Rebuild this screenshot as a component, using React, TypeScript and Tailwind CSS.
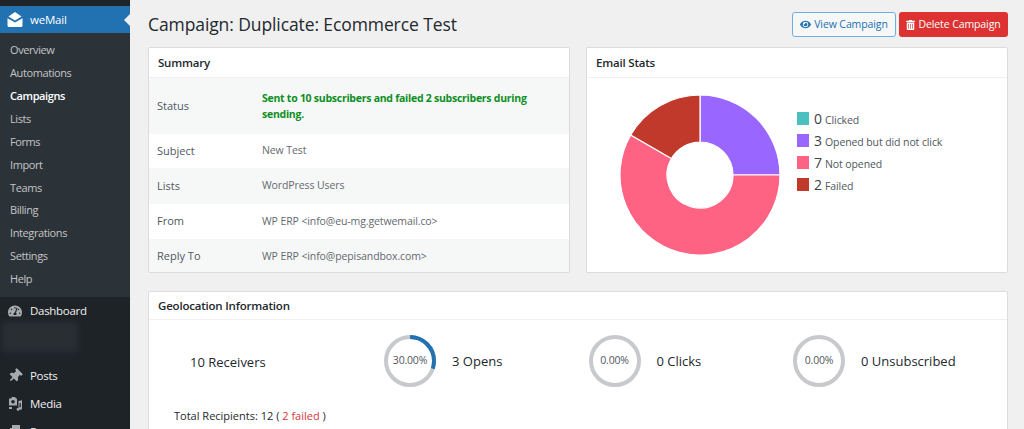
import React from "react";
import { FaEye, FaTrashAlt, FaTachometerAlt, FaThumbtack } from "react-icons/fa";

const sub = ["Overview", "Automations", "Campaigns", "Lists", "Forms", "Import", "Teams", "Billing", "Integrations", "Settings", "Help"];
const rows = [
  ["Status", "Sent to 10 subscribers and failed 2 subscribers during sending.", "h-[56px]"],
  ["Subject", "New Test", "h-[34px]"],
  ["Lists", "WordPress Users", "h-[36px]"],
  ["From", "WP ERP <info@eu-mg.getwemail.co>", "h-[35px]"],
  ["Reply To", "WP ERP <info@pepisandbox.com>", "h-[35px]"],
];
const legend = [
  ["0", "Clicked", "bg-[#4bc0c0]"],
  ["3", "Opened but did not click", "bg-[#9966ff]"],
  ["7", "Not opened", "bg-[#ff6384]"],
  ["2", "Failed", "bg-[#c0392b]"],
];

function Ring({ pct, label }: { pct: number; label: string }) {
  const c = 2 * Math.PI * 24;
  return (
    <div className="relative w-[52px] h-[52px] shrink-0">
      <svg width="52" height="52" viewBox="0 0 52 52" className="block">
        <circle cx="26" cy="26" r="24" fill="none" stroke="#c8c9cc" strokeWidth="4" />
        {pct > 0 && (
          <circle cx="26" cy="26" r="24" fill="none" stroke="#2271b1" strokeWidth="4" strokeDasharray={`${(c * pct) / 100} ${c}`} transform="rotate(-90 26 26)" />
        )}
      </svg>
      <div className="absolute inset-0 flex items-center justify-center text-[10.5px] text-[#50575e] tracking-[-0.2px]">{label}</div>
    </div>
  );
}

function Card({ title, className, head, children }: { title: string; className: string; head: string; children: React.ReactNode }) {
  return (
    <section className={`bg-white border border-[#dcdcde] rounded-[2px] ${className}`}>
      <h2 className={`${head} px-[9px] flex items-center border-b border-[#f0f0f1] text-[11.5px] font-semibold tracking-[-0.2px] text-[#23282d]`}>{title}</h2>
      {children}
    </section>
  );
}

function Stat({ text }: { text: string }) {
  return <span className="pt-[1px] text-[13px] font-medium text-[#23282d]">{text}</span>;
}

const navRow = "h-[28px] shrink-0 flex items-center pl-[8px] gap-[8px] text-[11.5px] tracking-[-0.3px] text-[#f0f0f1]";

export default function App() {
  return (
    <div className="flex w-[1024px] h-[429px] overflow-hidden bg-[#f0f0f1] font-['Open_Sans',sans-serif]">
      <aside className="w-[130px] shrink-0 bg-[#1d2327] pt-[6px] flex flex-col">
        <div className="relative h-[27px] shrink-0 bg-[#2271b1] flex items-center pl-[7px] gap-[7px] text-white text-[11.5px] tracking-[-0.2px]">
          <svg width="16" height="15" viewBox="0 0 16 15" fill="white">
            <path d="M8 0 L14.5 4.6 L8 8.6 L1.5 4.6 Z" />
            <path d="M0.5 6.2 L8 10.6 L15.5 6.2 V13.5 Q15.5 15 14 15 H2 Q0.5 15 0.5 13.5 Z" />
          </svg>
          <span>weMail</span>
          <span className="absolute right-0 top-[8px] w-0 h-0 border-y-[6px] border-y-transparent border-r-[6px] border-r-[#f0f0f1]" />
        </div>
        <ul className="bg-[#2c3338] h-[264px] shrink-0 pt-[6px]">
          {sub.map((s) => (
            <li key={s} className={`h-[22.9px] flex items-center pl-[10px] text-[11px] tracking-[-0.4px] ${s === "Campaigns" ? "text-white font-semibold" : "text-[#c3c4c7]"}`}>{s}</li>
          ))}
        </ul>
        <div className={navRow}>
          <FaTachometerAlt className="w-[14px] h-[14px] text-[#a7aaad]" />
          <span>Dashboard</span>
        </div>
        <div className="ml-[2px] mt-[-3px] w-[76px] h-[30px] shrink-0 bg-[#292e33] blur-[3px]" />
        <div className={`${navRow} mt-[10px]`}>
          <FaThumbtack className="w-[14px] h-[14px] text-[#a7aaad] rotate-45" />
          <span>Posts</span>
        </div>
        <div className={navRow}>
          <svg width="14" height="14" viewBox="0 0 14 14" fill="#a7aaad">
            <path d="M1 1.5 H3 L4 0 H7 L8 1.5 H9 V8.5 H1 Z M5 3 A1.8 1.8 0 1 0 5 6.6 A1.8 1.8 0 1 0 5 3 Z" fillRule="evenodd" />
            <path d="M10.5 4 L14 3.2 V11.5 A1.5 1.3 0 1 1 12.8 10.2 V6 L11.5 6.3 V12.5 A1.5 1.3 0 1 1 10.5 11.2 Z" />
            <path d="M1 10 H4 V12 H1 Z" />
          </svg>
          <span>Media</span>
        </div>
        <div className={navRow}>
          <svg width="14" height="14" viewBox="0 0 14 14" fill="#a7aaad"><path d="M4 0 H12 V10 H9 V14 H2 V3 H4 Z" /></svg>
          <span>Pages</span>
        </div>
      </aside>

      <main className="flex-1 min-w-0 pl-[18px] pr-[16px] pt-[12px]">
        <header className="flex items-center justify-between h-[25px]">
          <h1 className="text-[17.5px] text-[#23282d] tracking-[-0.1px]">Campaign: Duplicate: Ecommerce Test</h1>
          <div className="flex gap-[3px]">
            <button className="h-[25px] w-[104px] flex items-center justify-center gap-[3px] border border-[#72aee6] rounded-[3px] bg-[#f6f7f7] text-[#2271b1] text-[10.5px] tracking-[-0.1px]">
              <FaEye className="w-[11px] h-[11px]" />View Campaign
            </button>
            <button className="h-[25px] w-[109px] flex items-center justify-center gap-[3px] rounded-[3px] bg-[#dc3232] text-white text-[10.5px] tracking-[-0.1px]">
              <FaTrashAlt className="w-[9px] h-[10px]" />Delete Campaign
            </button>
          </div>
        </header>

        <div className="flex justify-between mt-[10px]">
          <Card title="Summary" head="h-[30px]" className="w-[422px] h-[226px] overflow-hidden">
            {rows.map(([k, v, h], i) => (
              <div key={k} className={`${h} flex items-center text-[10.5px] ${i % 2 === 0 ? "bg-[#f6f7f7]" : "bg-white"}`}>
                <span className="w-[113px] pl-[8px] shrink-0 text-[11px] text-[#50575e]">{k}</span>
                {i === 0 ? (
                  <span className="w-[285px] font-bold text-[#0c8f1f] leading-[16px] tracking-[-0.26px]">{v}</span>
                ) : (
                  <span className="text-[#646970] tracking-[-0.1px]">{v}</span>
                )}
              </div>
            ))}
          </Card>

          <Card title="Email Stats" head="h-[30px]" className="w-[422px] h-[226px]">
            <div className="flex items-center pl-[32px] pt-[16px]">
              <svg width="162" height="162" viewBox="-81 -81 162 162" className="shrink-0">
                <g stroke="#ffffff" strokeWidth="1.2">
                  <path fill="#9966ff" d="M0 -80 A80 80 0 0 1 80 0 L33 0 A33 33 0 0 0 0 -33 Z" />
                  <path fill="#ff6384" d="M80 0 A80 80 0 1 1 -69.28 -40 L-28.58 -16.5 A33 33 0 1 0 33 0 Z" />
                  <path fill="#c0392b" d="M-69.28 -40 A80 80 0 0 1 0 -80 L0 -33 A33 33 0 0 0 -28.58 -16.5 Z" />
                </g>
              </svg>
              <ul className="ml-[16px] flex flex-col gap-[4px] mt-[-48px]">
                {legend.map(([n, l, c]) => (
                  <li key={l} className="h-[18px] flex items-center">
                    <span className={`w-[12px] h-[13px] mr-[5px] ${c}`} />
                    <span className="flex items-baseline">
                      <span className="text-[14px] font-medium text-[#3c434a] mr-[3px]">{n}</span>
                      <span className="text-[10.5px] tracking-[-0.1px] text-[#50575e]">{l}</span>
                    </span>
                  </li>
                ))}
              </ul>
            </div>
          </Card>
        </div>

        <Card title="Geolocation Information" head="h-[28px]" className="mt-[18px] h-[200px]">
          <div className="grid grid-cols-[235px_204.5px_204.5px_1fr] items-center mt-[15px] h-[52px]">
            <div className="pl-[41px]"><Stat text="10 Receivers" /></div>
            <div className="flex items-center gap-[16px]"><Ring pct={30} label="30.00%" /><Stat text="3 Opens" /></div>
            <div className="flex items-center gap-[16px]"><Ring pct={0} label="0.00%" /><Stat text="0 Clicks" /></div>
            <div className="flex items-center gap-[16px]"><Ring pct={0} label="0.00%" /><Stat text="0 Unsubscribed" /></div>
          </div>
          <p className="pl-[25px] mt-[21px] text-[11px] font-medium text-[#23282d]">Total Recipients: 12 ( <span className="text-[#d63638]">2 failed</span> )</p>
        </Card>
      </main>
    </div>
  );
}
